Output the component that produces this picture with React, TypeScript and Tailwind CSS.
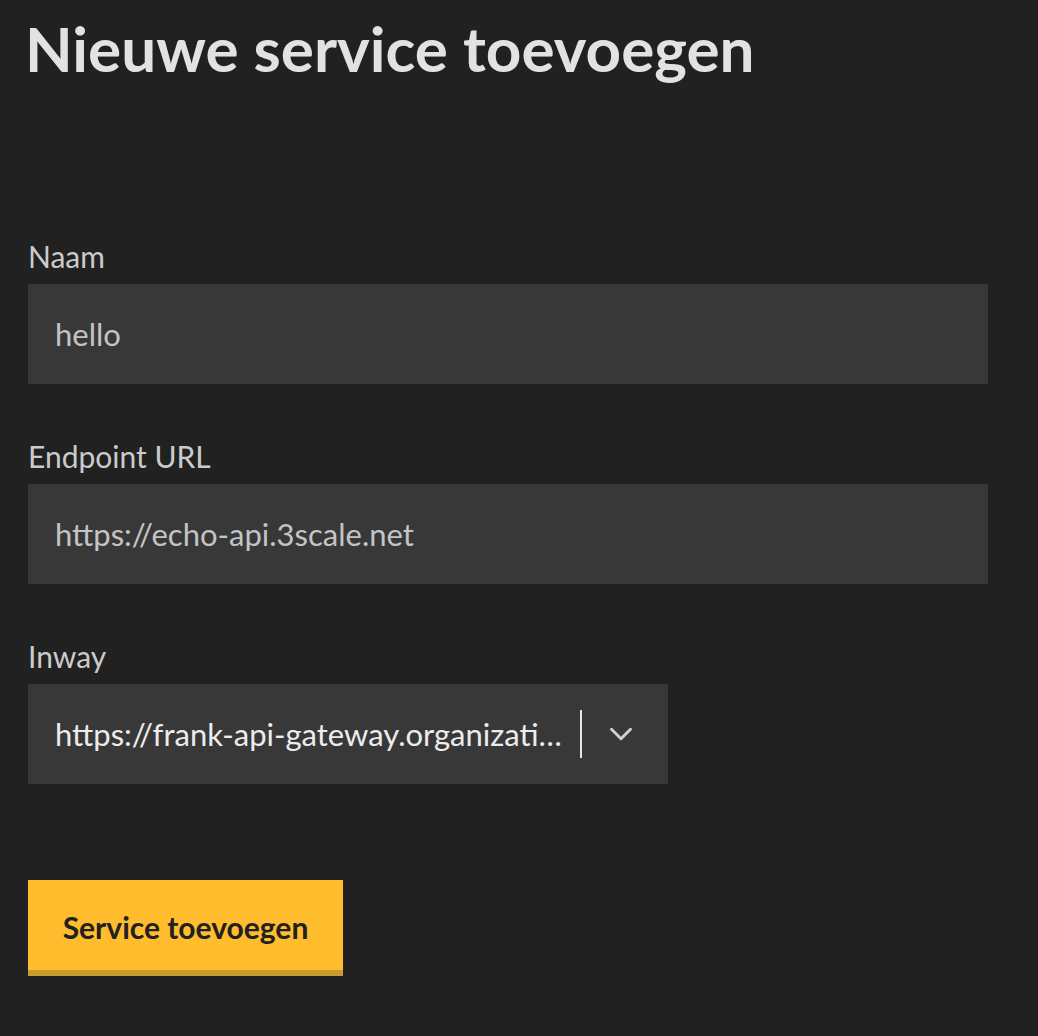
import { ChevronDown } from "lucide-react";

const font = { fontFamily: "Lato, 'Noto Sans', sans-serif" };

function Field({ label, value }: { label: string; value: string }) {
    return (
        <div className="mb-[52px]">
            <label className="block h-[40px] text-[30px] leading-[40px] text-[#cbcbcb] mb-[8px]">
                {label}
            </label>
            <div className="h-[100px] w-[960px] bg-[#383838] flex items-center px-[27px] text-[31px] text-[#c4c4c4]">
                {value}
            </div>
        </div>
    );
}

export default function App() {
    return (
        <div className="min-h-screen bg-[#212121] px-[28px]" style={font}>
            <h1 className="pt-[8px] h-[236px] text-[62px] leading-[80px] font-bold text-[#e2e2e2] -ml-[3px]">
                Nieuwe service toevoegen
            </h1>

            <Field label="Naam" value="hello" />
            <Field label="Endpoint URL" value="https://echo-api.3scale.net" />

            {/* Inway select */}
            <div>
                <label className="block h-[40px] text-[30px] leading-[40px] text-[#cbcbcb] mb-[8px]">
                    Inway
                </label>
                <div className="h-[100px] w-[640px] bg-[#383838] flex items-center">
                    <div className="w-[552px] flex-none pl-[27px] text-[31px] text-[#ececec] whitespace-nowrap overflow-hidden">
                        https://frank-api-gateway.organizati…
                    </div>
                    <div className="w-[2px] h-[48px] bg-[#e6e6e6]" />
                    <div className="w-[78px] flex justify-center">
                        <ChevronDown className="w-[38px] h-[38px] text-[#cfcfcf]" strokeWidth={1.9} />
                    </div>
                </div>
            </div>

            <button className="mt-[96px] h-[96px] w-[315px] pt-[4px] bg-[#ffbc2c] border-b-[6px] border-[#c99a2e] text-[30px] font-bold text-[#212121]">
                Service toevoegen
            </button>
        </div>
    );
}
